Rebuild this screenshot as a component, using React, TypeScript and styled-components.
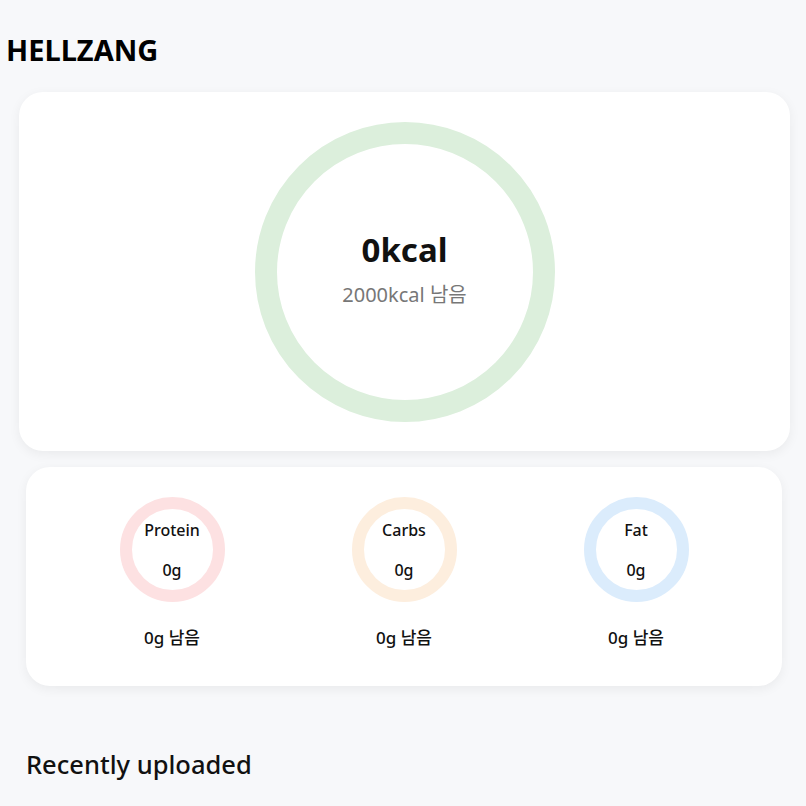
import React from "react";
import styled, { createGlobalStyle } from "styled-components";

const Global = createGlobalStyle`
  html, body { margin: 0; padding: 0; background: #f7f8fa; }
  body { font-family: "Noto Sans", "Noto Sans CJK KR", sans-serif; color: #111; }
`;

const Page = styled.div`
  display: flex;
  flex-direction: column;
  padding-top: 30px;
`;

const Title = styled.h1`
  margin: 0 0 22px 6px;
  font-size: 29px;
  line-height: 40px;
  font-weight: 700;
  color: #000;
`;

const Card = styled.section<{ $ml: number; $mr: number }>`
  background: #fff;
  border-radius: 24px;
  box-shadow: 0 3px 12px rgba(0, 0, 0, 0.06);
  margin: 0 ${(p) => p.$mr}px 0 ${(p) => p.$ml}px;
`;

const CalorieCard = styled(Card)`
  display: flex;
  justify-content: center;
  padding: 30px 0 29px;
  margin-bottom: 16px;
`;

const RingBox = styled.div<{ $size: number }>`
  position: relative;
  width: ${(p) => p.$size}px;
  height: ${(p) => p.$size}px;
  display: flex;
  flex-direction: column;
  align-items: center;
  justify-content: center;
`;

const RingSvg = styled.svg`
  position: absolute;
  inset: 0;
`;

const Kcal = styled.div`
  position: relative;
  font-size: 33px;
  font-weight: 700;
  line-height: 40px;
  margin-top: -6px;
`;

const Remain = styled.div`
  position: relative;
  font-size: 20px;
  color: #777;
  line-height: 26px;
  margin-top: 12px;
`;

const MacroCard = styled(Card)`
  display: grid;
  grid-template-columns: repeat(3, 1fr);
  padding: 30px 30px 36px;
`;

const Macro = styled.div`
  display: flex;
  flex-direction: column;
  align-items: center;
`;

const MacroLabel = styled.div`
  position: relative;
  font-size: 16px;
  font-weight: 500;
  line-height: 20px;
`;

const MacroValue = styled.div`
  position: relative;
  font-size: 16px;
  font-weight: 500;
  line-height: 20px;
  margin-top: 20px;
`;

const MacroRemain = styled.div`
  font-size: 17px;
  font-weight: 500;
  line-height: 24px;
  margin-top: 24px;
`;

const Section = styled.h2`
  margin: 62px 0 0 26px;
  font-size: 25.5px;
  font-weight: 500;
  line-height: 32px;
  color: #111;
`;

function Ring({ size, stroke, color }: { size: number; stroke: number; color: string }) {
  const r = (size - stroke) / 2;
  return (
    <RingSvg width={size} height={size} viewBox={`0 0 ${size} ${size}`}>
      <circle cx={size / 2} cy={size / 2} r={r} fill="none" stroke={color} strokeWidth={stroke} />
    </RingSvg>
  );
}

const macros = [
  { name: "Protein", color: "#fde1e2" },
  { name: "Carbs", color: "#fdeede" },
  { name: "Fat", color: "#dbecfc" },
];

export default function App() {
  return (
    <>
      <Global />
      <Page>
        <Title>HELLZANG</Title>
        <CalorieCard $ml={19} $mr={16}>
          <RingBox $size={300}>
            <Ring size={300} stroke={22} color="#dcefdc" />
            <Kcal>0kcal</Kcal>
            <Remain>2000kcal 남음</Remain>
          </RingBox>
        </CalorieCard>
        <MacroCard $ml={26} $mr={24}>
          {macros.map((m) => (
            <Macro key={m.name}>
              <RingBox $size={105}>
                <Ring size={105} stroke={12} color={m.color} />
                <MacroLabel>{m.name}</MacroLabel>
                <MacroValue>0g</MacroValue>
              </RingBox>
              <MacroRemain>0g 남음</MacroRemain>
            </Macro>
          ))}
        </MacroCard>
        <Section>Recently uploaded</Section>
      </Page>
    </>
  );
}
